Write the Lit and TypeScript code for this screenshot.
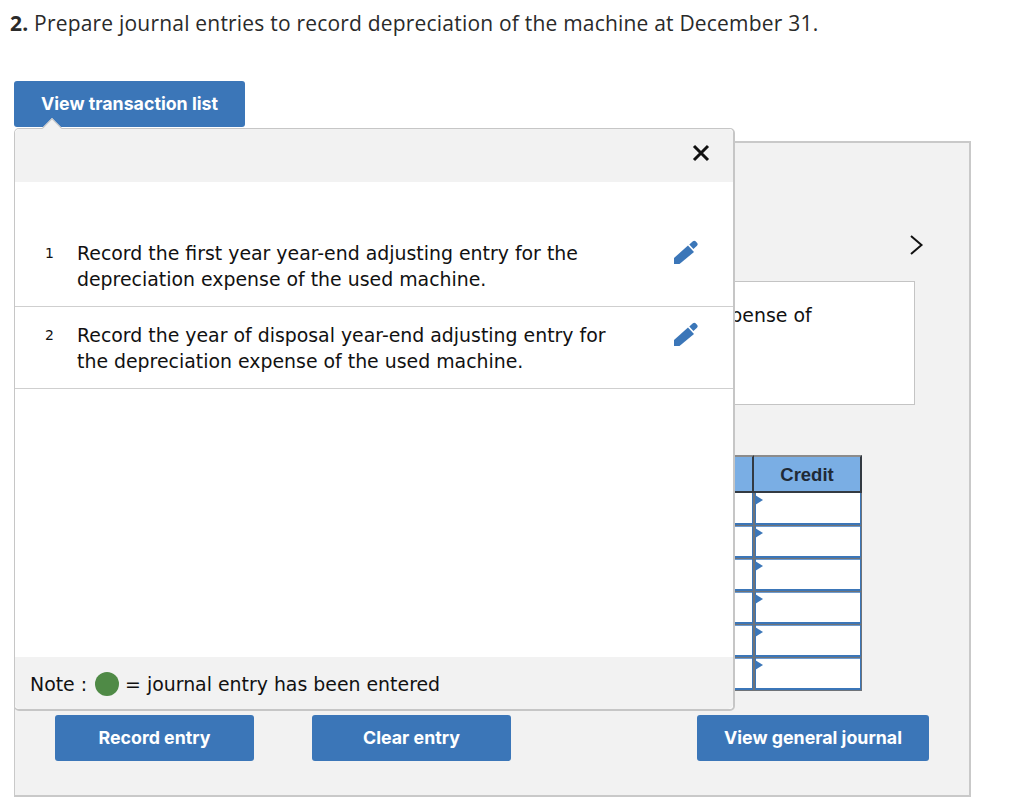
import { LitElement, html, css } from 'lit';
import { customElement } from 'lit/decorators.js';

const pencil = html`<svg class="pencil" viewBox="0 0 24 24" width="24" height="24">
  <path d="M0 24v-6L14 5.5l6 6.5L5.5 24z" fill="#3b76b8"/>
  <path d="M15.3 4.4l3.6-3.2c.8-.7 2-.7 2.7.1l1.6 1.8c.7.8.6 2-.2 2.7l-3.6 3.2z" fill="#3b76b8"/>
</svg>`;

@customElement('app-root')
export class AppRoot extends LitElement {
  static styles = css`
    :host {
      display: block;
      height: 805px;
      position: relative;
      background: #fff;
      overflow: hidden;
      font-family: 'DejaVu Sans', sans-serif;
      color: #111;
    }

    .question {
      margin: 0;
      padding: 10px 0 0 10px;
      font-family: 'Open Sans', sans-serif;
      font-size: 21px;
      letter-spacing: 0.2px;
      line-height: 27px;
      color: #2a2a2a;
    }

    .btn {
      display: flex;
      align-items: center;
      justify-content: center;
      box-sizing: border-box;
      height: 46px;
      padding: 0 0 1px;
      border: 0;
      border-radius: 3px;
      background: #3b76b8;
      color: #fff;
      font-family: 'Inter', sans-serif;
      font-size: 17.8px;
      font-weight: 700;
    }

    .view-list {
      width: 231px;
      margin: 44px 0 0 14px;
    }

    .panel {
      box-sizing: border-box;
      width: 957px;
      height: 656px;
      margin: 14px 0 0 14px;
      border: 2px solid #c9c9c9;
      border-left-width: 1px;
      background: #f2f2f2;
      position: relative;
      display: flex;
      flex-direction: column;
    }

    .next {
      position: absolute;
      left: 894px;
      top: 91px;
    }

    .prompt {
      box-sizing: border-box;
      width: 860px;
      height: 124px;
      margin: 138px 0 0 40px;
      padding: 20px 73px 0 21px;
      border: 1px solid #c4c4c4;
      background: #fff;
      font-size: 18.9px;
      line-height: 26px;
    }

    .journal {
      display: grid;
      grid-template-columns: 108px 108px;
      justify-content: end;
      width: 792px;
      margin: 50px 0 0 55px;
    }

    .head {
      box-sizing: border-box;
      height: 38px;
      display: flex;
      align-items: center;
      justify-content: center;
      padding-top: 1px;
      background: #7aaee4;
      border-top: 2px solid #8c8c8c;
      border-right: 2px solid #333a42;
      border-bottom: 2px solid #333a42;
      font-family: 'Liberation Sans', sans-serif;
      font-size: 18.5px;
      font-weight: 700;
      color: #1f2a36;
    }

    .cell {
      box-sizing: border-box;
      height: 33px;
      background: #fff;
      border: 1px solid #6f7378;
      border-top: 0;
      box-shadow: inset 1px 0 0 #3b76b8, inset -1px 0 0 #3b76b8, inset 0 -2px 0 #3b76b8;
      position: relative;
    }

    .cell:nth-child(n + 5) {
      box-shadow: inset 1px 0 0 #3b76b8, inset -1px 0 0 #3b76b8, inset 0 -2px 0 #3b76b8, inset 0 1px 0 #6d9bd0;
    }

    .cell::before {
      content: '';
      position: absolute;
      left: 0;
      top: 2px;
      border-left: 8px solid #3b76b8;
      border-top: 5px solid transparent;
      border-bottom: 5px solid transparent;
    }

    .actions {
      display: flex;
      margin: 24px 0 0 40px;
    }

    .actions .btn {
      width: 199px;
      margin-right: 58px;
    }

    .actions .btn.wide {
      width: 232px;
      margin: 0 0 0 128px;
    }

    /* popover laid over the panel */
    .popover {
      position: absolute;
      left: 14px;
      top: 128px;
      box-sizing: border-box;
      width: 721px;
      height: 583px;
      display: flex;
      flex-direction: column;
      border: 1px solid #c6c6c6;
      border-right-width: 2px;
      border-bottom-width: 2px;
      border-radius: 5px;
      background: #fff;
    }

    .popover::before {
      content: '';
      position: absolute;
      left: 30px;
      top: -8px;
      width: 14px;
      height: 14px;
      transform: rotate(45deg);
      background: #f2f2f2;
      border-top: 1px solid #c6c6c6;
      border-left: 1px solid #c6c6c6;
      box-sizing: border-box;
    }

    .pop-head {
      box-sizing: border-box;
      height: 53px;
      flex: none;
      display: flex;
      justify-content: flex-end;
      align-items: center;
      padding: 0 23px 5px 0;
      background: #f2f2f2;
      border-radius: 5px 5px 0 0;
    }

    .rows {
      flex: 1;
      padding-top: 45px;
    }

    .row {
      box-sizing: border-box;
      height: 82px;
      display: grid;
      grid-template-columns: 62px 1fr 60px;
      padding-top: 15px;
      border-bottom: 1px solid #cfcfcf;
      font-size: 18.9px;
      line-height: 26px;
    }

    .row:first-child {
      height: 80px;
      padding-top: 13px;
    }

    .row .num {
      font-size: 14px;
      padding-left: 30px;
    }

    .pencil {
      margin-left: 1px;
    }

    .note {
      box-sizing: border-box;
      height: 52px;
      flex: none;
      display: flex;
      align-items: center;
      padding: 2px 0 0 15px;
      background: #f2f2f2;
      border-radius: 0 0 5px 5px;
      font-size: 18.9px;
      white-space: pre;
    }

    .dot {
      width: 24px;
      height: 24px;
      margin: 0 6px 0 8px;
      border-radius: 50%;
      background: #4f8a46;
    }
  `;

  render() {
    return html`
      <p class="question"><b>2.</b> Prepare journal entries to record depreciation of the machine at December 31.</p>
      <button class="btn view-list">View transaction list</button>
      <section class="panel">
        <svg class="next" width="16" height="22" viewBox="0 0 16 22">
          <path d="M2 2l10.5 9L2 20" fill="none" stroke="#111" stroke-width="2"/>
        </svg>
        <div class="prompt">Record the first year year-end adjusting entry for the depreciation expense of the used machine.</div>
        <div class="journal">
          <div class="head">Debit</div><div class="head">Credit</div>
          ${[0, 1, 2, 3, 4, 5].map(() => html`<div class="cell"></div><div class="cell"></div>`)}
        </div>
        <div class="actions">
          <button class="btn">Record entry</button>
          <button class="btn">Clear entry</button>
          <button class="btn wide">View general journal</button>
        </div>
      </section>
      <aside class="popover">
        <div class="pop-head">
          <svg width="18" height="18" viewBox="0 0 18 18">
            <path d="M2 2l14 14M16 2L2 16" stroke="#111" stroke-width="3"/>
          </svg>
        </div>
        <div class="rows">
          <div class="row">
            <span class="num">1</span>
            <span>Record the first year year-end adjusting entry for the<br />depreciation expense of the used machine.</span>
            ${pencil}
          </div>
          <div class="row">
            <span class="num">2</span>
            <span>Record the year of disposal year-end adjusting entry for<br />the depreciation expense of the used machine.</span>
            ${pencil}
          </div>
        </div>
        <div class="note">Note :<span class="dot"></span>= journal entry has been entered</div>
      </aside>
    `;
  }
}
